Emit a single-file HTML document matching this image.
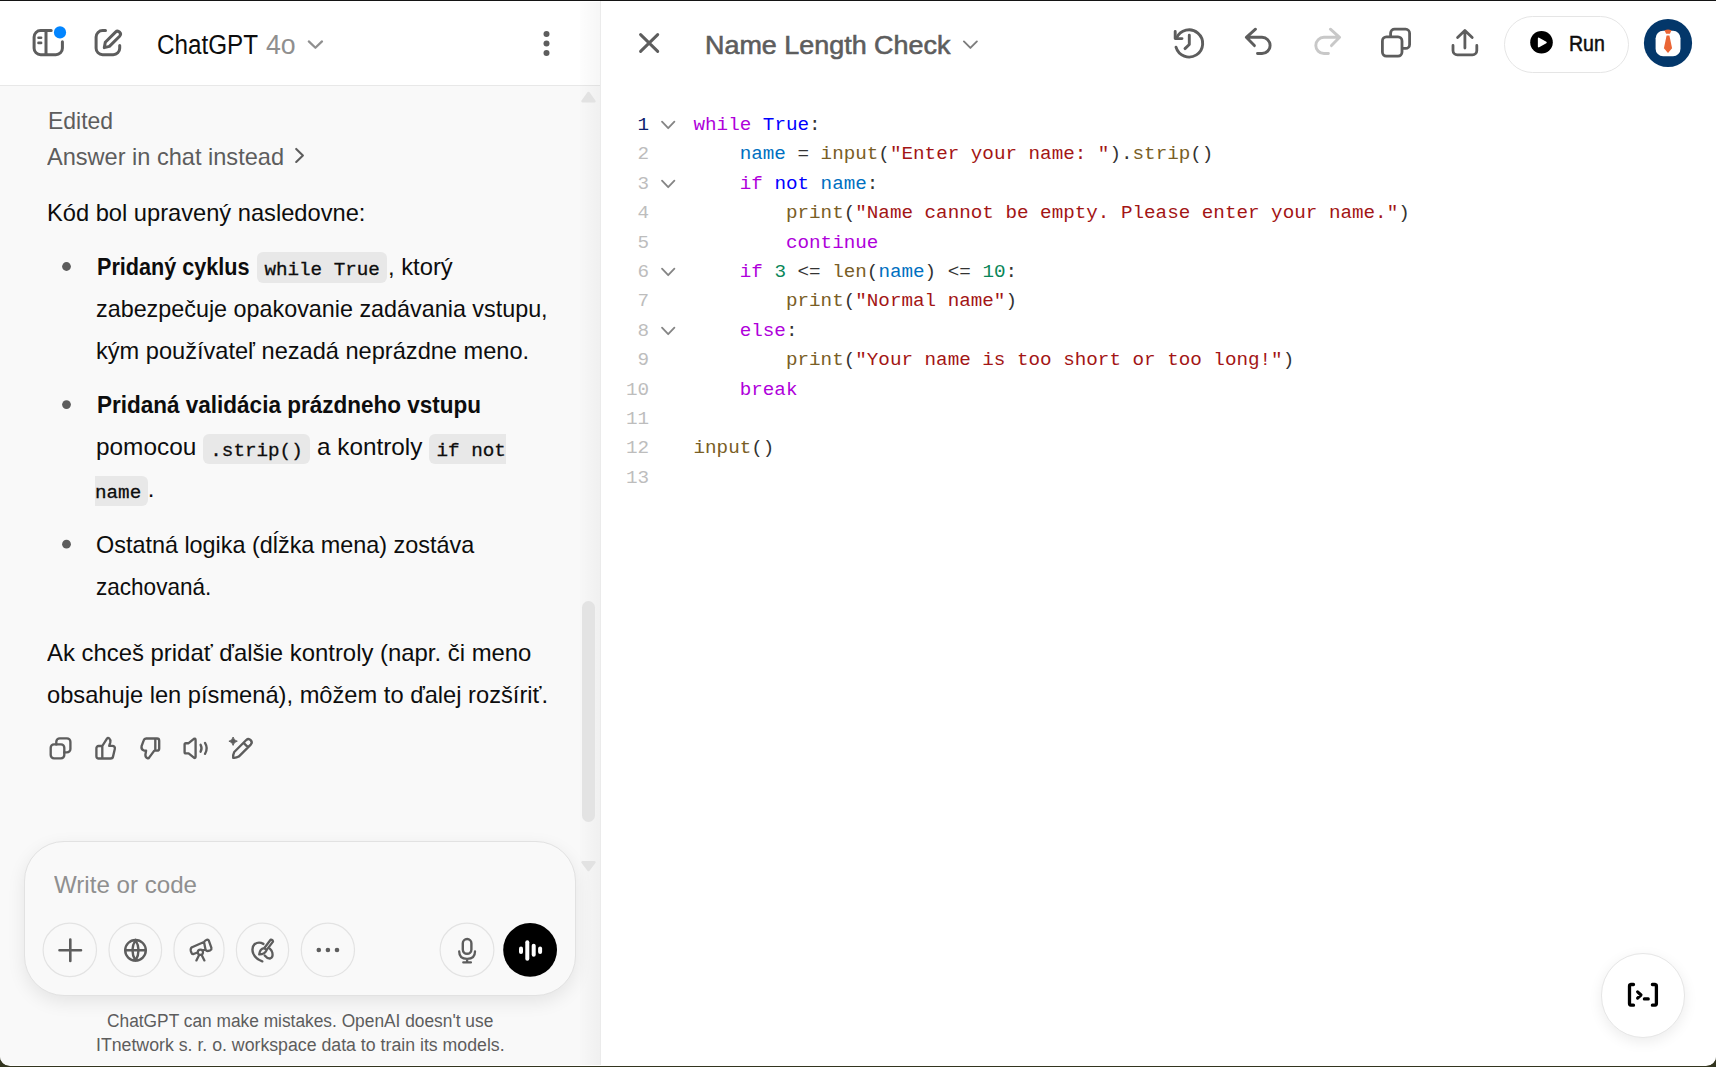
<!DOCTYPE html>
<html><head><meta charset="utf-8">
<style>
*{box-sizing:border-box;margin:0;padding:0}
html,body{width:1716px;height:1067px;overflow:hidden;background:#33351f;font-family:"Liberation Sans",sans-serif}
#win{position:absolute;left:0;top:1px;width:1716px;height:1065px;background:#fff;border-radius:0 0 10px 10px;overflow:hidden}
#left{position:absolute;left:0;top:0;width:600px;height:1064px;background:#f9f9f9}
#lhead{position:absolute;left:0;top:0;width:600px;height:85px;background:#fff;border-bottom:1.5px solid #e8e8e8}
#shade{position:absolute;left:580px;top:1px;width:20px;height:1063px;background:linear-gradient(to right,rgba(0,0,0,0.008),rgba(0,0,0,0.035))}
#right{position:absolute;left:600px;top:0;width:1116px;height:1064px;background:#fff}
#vline{position:absolute;left:600px;top:0;width:1px;height:1064px;background:#ebebeb}
.t{position:absolute;white-space:nowrap;line-height:1;font-family:"Liberation Sans",sans-serif}
.c{position:absolute;left:693.5px;white-space:pre;line-height:1;font-family:"Liberation Mono",monospace;font-size:19.25px;color:#333}
.ln{position:absolute;left:600px;width:49px;text-align:right;line-height:1;font-family:"Liberation Mono",monospace;font-size:19.25px}
.ic{position:absolute;background:#e8e8e8;border-radius:6px;height:30.6px;font-family:"Liberation Mono",monospace;font-size:19.25px;font-weight:400;-webkit-text-stroke:0.3px #0d0d0d;color:#0d0d0d;line-height:34px;white-space:pre}
#thumb{position:absolute;left:582px;top:599.5px;width:13px;height:221.5px;border-radius:7px;background:#e3e3e3}
#inbox{position:absolute;left:24px;top:840px;width:551.5px;height:155px;border-radius:40px;background:#f9f9f9;border:1.2px solid #e2e2e2;box-shadow:0 6px 18px rgba(0,0,0,0.085)}
#runbtn{position:absolute;left:1504px;top:14.6px;width:125px;height:57px;border-radius:29px;border:1.2px solid #e5e5e5;background:#fff}
#term{position:absolute;left:1600.7px;top:952.2px;width:84.5px;height:84.5px;border-radius:50%;background:#fff;border:1.2px solid #e6e6e6;box-shadow:0 4px 14px rgba(0,0,0,0.08)}
#ov{position:absolute;left:0;top:-1px;width:1716px;height:1067px}
</style></head><body>
<div style="position:absolute;left:0;top:0;width:1716px;height:1px;background:#141414"></div>
<div id="win">
<div id="left"><div id="lhead"></div></div>
<div id="right"></div>
<div id="shade"></div>
<div id="vline"></div>
<div id="thumb"></div>
<div id="inbox"></div>
<div id="runbtn"></div>
<div id="term"></div>
<div class="ic" style="left:257.1px;top:251px;width:129.7px;padding-left:7.3px;line-height:36.6px">while True</div>
<div class="ic" style="left:203px;top:432.5px;width:107px;padding-left:7.3px">.strip()</div>
<div class="ic" style="left:429.2px;top:432.5px;width:77.1px;padding-left:7.3px;border-radius:6px 0 0 6px">if not</div>
<div class="ic" style="left:95px;top:474.5px;width:52.6px;padding-left:0;border-radius:0 6px 6px 0">name</div>
<div class="c" style="top:115.24px"><span style="color:#af00db">while</span> <span style="color:#0000ff">True</span><span style="color:#333333">:</span></div>
<div class="ln" style="top:115.24px;color:#0b216f">1</div>
<div class="c" style="top:144.24px">    <span style="color:#0070c1">name</span><span style="color:#333333"> = </span><span style="color:#795e26">input</span><span style="color:#333333">(</span><span style="color:#a31515">"Enter your name: "</span><span style="color:#333333">).</span><span style="color:#795e26">strip</span><span style="color:#333333">()</span></div>
<div class="ln" style="top:144.24px;color:#bdbdbd">2</div>
<div class="c" style="top:174.24px">    <span style="color:#af00db">if</span> <span style="color:#0000ff">not</span> <span style="color:#0070c1">name</span><span style="color:#333333">:</span></div>
<div class="ln" style="top:174.24px;color:#bdbdbd">3</div>
<div class="c" style="top:203.24px">        <span style="color:#795e26">print</span><span style="color:#333333">(</span><span style="color:#a31515">"Name cannot be empty. Please enter your name."</span><span style="color:#333333">)</span></div>
<div class="ln" style="top:203.24px;color:#bdbdbd">4</div>
<div class="c" style="top:233.24px">        <span style="color:#af00db">continue</span></div>
<div class="ln" style="top:233.24px;color:#bdbdbd">5</div>
<div class="c" style="top:262.24px">    <span style="color:#af00db">if</span> <span style="color:#098658">3</span><span style="color:#333333"> &lt;= </span><span style="color:#795e26">len</span><span style="color:#333333">(</span><span style="color:#0070c1">name</span><span style="color:#333333">) &lt;= </span><span style="color:#098658">10</span><span style="color:#333333">:</span></div>
<div class="ln" style="top:262.24px;color:#bdbdbd">6</div>
<div class="c" style="top:291.24px">        <span style="color:#795e26">print</span><span style="color:#333333">(</span><span style="color:#a31515">"Normal name"</span><span style="color:#333333">)</span></div>
<div class="ln" style="top:291.24px;color:#bdbdbd">7</div>
<div class="c" style="top:321.24px">    <span style="color:#af00db">else</span><span style="color:#333333">:</span></div>
<div class="ln" style="top:321.24px;color:#bdbdbd">8</div>
<div class="c" style="top:350.24px">        <span style="color:#795e26">print</span><span style="color:#333333">(</span><span style="color:#a31515">"Your name is too short or too long!"</span><span style="color:#333333">)</span></div>
<div class="ln" style="top:350.24px;color:#bdbdbd">9</div>
<div class="c" style="top:380.24px">    <span style="color:#af00db">break</span></div>
<div class="ln" style="top:380.24px;color:#bdbdbd">10</div>
<div class="c" style="top:409.24px"></div>
<div class="ln" style="top:409.24px;color:#bdbdbd">11</div>
<div class="c" style="top:438.24px"><span style="color:#795e26">input</span><span style="color:#333333">()</span></div>
<div class="ln" style="top:438.24px;color:#bdbdbd">12</div>
<div class="c" style="top:468.24px"></div>
<div class="ln" style="top:468.24px;color:#bdbdbd">13</div>
</div>
<div style="position:absolute;left:0;top:0;width:1716px;height:1067px">
<div class="t" id="t0" style="left:157.00px;top:32.14px;font-size:27px;font-weight:400;color:#0d0d0d;transform:scaleX(0.8974);transform-origin:0 0;">ChatGPT</div>
<div class="t" id="t1" style="left:266.00px;top:32.14px;font-size:27px;font-weight:400;color:#8f8f8f;transform:scaleX(0.9885);transform-origin:0 0;">4o</div>
<div class="t" id="t2" style="left:47.50px;top:108.68px;font-size:24px;font-weight:400;color:#5d5d5d;transform:scaleX(0.9550);transform-origin:0 0;">Edited</div>
<div class="t" id="t3" style="left:47.10px;top:144.68px;font-size:24px;font-weight:400;color:#5d5d5d;transform:scaleX(0.9815);transform-origin:0 0;">Answer in chat instead</div>
<div class="t" id="t4" style="left:47.30px;top:201.18px;font-size:24px;font-weight:400;color:#0d0d0d;transform:scaleX(0.9860);transform-origin:0 0;">Kód bol upravený nasledovne:</div>
<div class="t" id="t5" style="left:96.50px;top:255.91px;font-size:23.5px;font-weight:700;color:#0d0d0d;transform:scaleX(0.9199);transform-origin:0 0;">Pridaný cyklus</div>
<div class="t" id="t6" style="left:387.50px;top:255.48px;font-size:24px;font-weight:400;color:#0d0d0d;transform:scaleX(0.9901);transform-origin:0 0;">, ktorý</div>
<div class="t" id="t7" style="left:95.60px;top:297.28px;font-size:24px;font-weight:400;color:#0d0d0d;transform:scaleX(0.9726);transform-origin:0 0;">zabezpečuje opakovanie zadávania vstupu,</div>
<div class="t" id="t8" style="left:95.60px;top:339.08px;font-size:24px;font-weight:400;color:#0d0d0d;transform:scaleX(0.9830);transform-origin:0 0;">kým používateľ nezadá neprázdne meno.</div>
<div class="t" id="t9" style="left:96.50px;top:393.61px;font-size:23.5px;font-weight:700;color:#0d0d0d;transform:scaleX(0.9578);transform-origin:0 0;">Pridaná validácia prázdneho vstupu</div>
<div class="t" id="t10" style="left:95.50px;top:435.08px;font-size:24px;font-weight:400;color:#0d0d0d;transform:scaleX(1.0159);transform-origin:0 0;">pomocou</div>
<div class="t" id="t11" style="left:317.00px;top:435.08px;font-size:24px;font-weight:400;color:#0d0d0d;transform:scaleX(1.0119);transform-origin:0 0;">a kontroly</div>
<div class="t" id="t12" style="left:147.80px;top:477.48px;font-size:24px;font-weight:400;color:#0d0d0d;transform:scaleX(1.0000);transform-origin:0 0;">.</div>
<div class="t" id="t13" style="left:96.00px;top:533.18px;font-size:24px;font-weight:400;color:#0d0d0d;transform:scaleX(0.9743);transform-origin:0 0;">Ostatná logika (dĺžka mena) zostáva</div>
<div class="t" id="t14" style="left:95.60px;top:574.98px;font-size:24px;font-weight:400;color:#0d0d0d;transform:scaleX(0.9392);transform-origin:0 0;">zachovaná.</div>
<div class="t" id="t15" style="left:47.30px;top:641.28px;font-size:24px;font-weight:400;color:#0d0d0d;transform:scaleX(0.9954);transform-origin:0 0;">Ak chceš pridať ďalšie kontroly (napr. či meno</div>
<div class="t" id="t16" style="left:47.30px;top:682.98px;font-size:24px;font-weight:400;color:#0d0d0d;transform:scaleX(0.9863);transform-origin:0 0;">obsahuje len písmená), môžem to ďalej rozšíriť.</div>
<div class="t" id="t17" style="left:54.20px;top:873.18px;font-size:24px;font-weight:400;color:#8f8f8f;transform:scaleX(1.0051);transform-origin:0 0;">Write or code</div>
<div class="t" id="t18" style="left:106.70px;top:1011.76px;font-size:18px;font-weight:400;color:#5d5d5d;transform:scaleX(0.9626);transform-origin:0 0;">ChatGPT can make mistakes. OpenAI doesn't use</div>
<div class="t" id="t19" style="left:96.40px;top:1035.96px;font-size:18px;font-weight:400;color:#5d5d5d;transform:scaleX(0.9842);transform-origin:0 0;">ITnetwork s. r. o. workspace data to train its models.</div>
<div class="t" id="t20" style="left:705.00px;top:32.27px;font-size:26.5px;font-weight:400;color:#5d5d5d;transform:scaleX(1.0158);transform-origin:0 0;-webkit-text-stroke:0.6px #5d5d5d;">Name Length Check</div>
<div class="t" id="t21" style="left:1568.80px;top:32.72px;font-size:21.6px;font-weight:400;color:#0d0d0d;transform:scaleX(0.9035);transform-origin:0 0;-webkit-text-stroke:0.5px #0d0d0d;">Run</div>
</div>
<svg id="ov" width="1716" height="1067" viewBox="0 0 1716 1067" style="position:absolute;left:0;top:0">
<path d="M51.2 30.6 H40.6 A6.5 6.5 0 0 0 34.1 37.1 V48.2 A6.5 6.5 0 0 0 40.6 54.7 H55.9 A6.5 6.5 0 0 0 62.4 48.2 V41.8" stroke="#5d5d5d" stroke-width="3" fill="none" stroke-linecap="round" stroke-linejoin="round"/>
<path d="M46 31 V54.5" stroke="#5d5d5d" stroke-width="3" fill="none" stroke-linecap="round" stroke-linejoin="round"/>
<path d="M38.5 37.8 H41.1 M38.5 42.9 H41.1" stroke="#5d5d5d" stroke-width="2.6" fill="none" stroke-linecap="round" stroke-linejoin="round"/>
<circle cx="60" cy="32.4" r="6.1" fill="#0285ff"/>
<path d="M105.5 30.6 H102.6 A6.5 6.5 0 0 0 96.1 37.1 V48.2 A6.5 6.5 0 0 0 102.6 54.7 H113.2 A6.5 6.5 0 0 0 119.7 48.2 V45.5" stroke="#5d5d5d" stroke-width="3" fill="none" stroke-linecap="round" stroke-linejoin="round"/>
<path d="M104.3 47.6 L105.3 42.3 L115.5 32.1 A2.9 2.9 0 0 1 119.6 36.2 L109.4 46.4 Z" stroke="#5d5d5d" stroke-width="3" fill="none" stroke-linecap="round" stroke-linejoin="round"/>
<circle cx="546.5" cy="34.1" r="3" fill="#5d5d5d"/>
<circle cx="546.5" cy="43.4" r="3" fill="#5d5d5d"/>
<circle cx="546.5" cy="53" r="3" fill="#5d5d5d"/>
<path d="M308.8 41.4 L315.4 47.8 L322 41.4" stroke="#8f8f8f" stroke-width="2.2" fill="none" stroke-linecap="round" stroke-linejoin="round"/>
<path d="M296.2 148.9 L302.9 155.4 L296.2 161.9" stroke="#5d5d5d" stroke-width="2.1" fill="none" stroke-linecap="round" stroke-linejoin="round"/>
<path d="M640.6 34.6 L657.7 51.4 M657.7 34.6 L640.6 51.4" stroke="#5d5d5d" stroke-width="3" fill="none" stroke-linecap="round" stroke-linejoin="round"/>
<path d="M963.9 41.4 L970.4 47.9 L976.9 41.4" stroke="#7d7d7d" stroke-width="1.9" fill="none" stroke-linecap="round" stroke-linejoin="round"/>
<path d="M1176.6 38 A13.6 13.6 0 1 1 1176 47.2" stroke="#5d5d5d" stroke-width="2.9" fill="none" stroke-linecap="round" stroke-linejoin="round"/>
<path d="M1175.2 31.4 V38.6 H1182" stroke="#5d5d5d" stroke-width="2.9" fill="none" stroke-linecap="round" stroke-linejoin="round"/>
<path d="M1189.3 35.2 V44.5 L1185 48.6" stroke="#5d5d5d" stroke-width="2.9" fill="none" stroke-linecap="round" stroke-linejoin="round"/>
<path d="M1255.5 29.2 L1246.3 37.3 L1254.4 45.6 M1246.8 37.3 H1262 A8.1 8.1 0 0 1 1262 53.5 H1257.5" stroke="#5d5d5d" stroke-width="2.9" fill="none" stroke-linecap="round" stroke-linejoin="round"/>
<g transform="translate(2585.9 0) scale(-1 1)"><path d="M1255.5 29.2 L1246.3 37.3 L1254.4 45.6 M1246.8 37.3 H1262 A8.1 8.1 0 0 1 1262 53.5 H1257.5" stroke="#c8c8c8" stroke-width="2.9" fill="none" stroke-linecap="round" stroke-linejoin="round"/></g>
<path d="M1390.6 36 V33 A4 4 0 0 1 1394.6 29.2 H1405.6 A4 4 0 0 1 1409.6 33.2 V44.4 A4 4 0 0 1 1405.6 48.4 H1402.6" stroke="#5d5d5d" stroke-width="2.8" fill="none" stroke-linecap="round" stroke-linejoin="round"/>
<rect x="1382.4" y="36.9" width="19.6" height="19.2" rx="4" stroke="#5d5d5d" stroke-width="2.8" fill="none" stroke-linecap="round" stroke-linejoin="round"/>
<path d="M1464.9 48 V31 M1457.6 37.6 L1464.9 30.6 L1472.2 37.6 M1453 45.5 V50.5 A4.3 4.3 0 0 0 1457.3 54.8 H1472.5 A4.3 4.3 0 0 0 1476.8 50.5 V45.5" stroke="#5d5d5d" stroke-width="2.8" fill="none" stroke-linecap="round" stroke-linejoin="round"/>
<circle cx="1541.5" cy="42.3" r="11.3" fill="#000"/>
<path d="M1538.7 38.4 L1545.9 42.4 L1538.7 46.6 Z" fill="#fff" stroke="#fff" stroke-width="1.7" stroke-linejoin="round"/>
<circle cx="1668" cy="43" r="24.1" fill="#03376a"/>
<rect x="1655.6" y="30.7" width="24.9" height="25.6" rx="7.5" fill="#fff"/>
<path d="M1664.5 30.3 Q1668 28.8 1671.5 30.3 L1669.9 33.8 H1666.1 Z" fill="#ea6535"/>
<path d="M1666.6 35.4 H1669.4 L1672.1 48.2 L1668 53 L1663.9 48.2 Z" fill="#ea6535"/>
<circle cx="66.5" cy="266.5" r="4.4" fill="#5d5d5d"/>
<circle cx="66.5" cy="404.6" r="4.4" fill="#5d5d5d"/>
<circle cx="66.5" cy="544.2" r="4.4" fill="#5d5d5d"/>
<path d="M588.5 93 L594.4 101.2 H582.6 Z" fill="#e2e2e2" stroke="#e2e2e2" stroke-width="2.6" stroke-linejoin="round"/>
<path d="M582.6 862.3 H594.4 L588.5 870 Z" fill="#e2e2e2" stroke="#e2e2e2" stroke-width="2.6" stroke-linejoin="round"/>
<path d="M56.3 744.4 V741.8 A3.5 3.5 0 0 1 59.8 738.3 H66.9 A3.5 3.5 0 0 1 70.4 741.8 V748.9 A3.5 3.5 0 0 1 66.9 752.4 H64.3" stroke="#5d5d5d" stroke-width="2.35" fill="none" stroke-linecap="round" stroke-linejoin="round"/>
<rect x="50.7" y="744.4" width="13.6" height="13.9" rx="3.3" stroke="#5d5d5d" stroke-width="2.35" fill="none" stroke-linecap="round" stroke-linejoin="round"/>
<path d="M102.3 746 L106.8 738.8 Q107.8 737.3 109.2 738.4 Q110.9 739.9 110.3 742.3 L109.2 745.8 H112.4 A2.5 2.5 0 0 1 114.8 749 L113.1 756.3 A2.6 2.6 0 0 1 110.5 758.5 H98.3 A2.2 2.2 0 0 1 96.4 756.3 V748.5 A2.3 2.3 0 0 1 98.6 746 H102.3 V758.4" stroke="#5d5d5d" stroke-width="2.35" fill="none" stroke-linecap="round" stroke-linejoin="round"/>
<path d="M155.3 738.5 H146.2 Q144.3 738.5 143.7 740.4 L141.6 746.2 Q140.9 749.4 143.9 750.5 L146.1 750.6 L145.4 754.8 Q145.3 757.2 147.4 758.2 Q148.6 758.7 149.3 757.4 L154.3 750.6 H157 Q159.2 750.6 159.2 748.4 V740.7 Q159.2 738.5 157 738.5 H155.3 V750.6" stroke="#5d5d5d" stroke-width="2.35" fill="none" stroke-linecap="round" stroke-linejoin="round"/>
<path d="M195.6 740.2 V756.6 Q195.6 758.6 193.9 757.7 L188.6 753.4 H185.9 Q184.6 753.4 184.6 752 V744.6 Q184.6 743.2 185.9 743.2 H188.6 L193.9 738.9 Q195.6 738 195.6 740.2 Z" stroke="#5d5d5d" stroke-width="2.35" fill="none" stroke-linecap="round" stroke-linejoin="round"/>
<path d="M200.6 744.8 Q202.6 748.3 200.6 751.7 M205 742.9 Q208.4 748.3 205 753.8" stroke="#5d5d5d" stroke-width="2.35" fill="none" stroke-linecap="round" stroke-linejoin="round"/>
<path d="M234.24 752.04 L246.24 740.04 A3.2 3.2 0 0 1 250.76 744.56 L238.76 756.56 Q236 758.2 233.2 757.8 Q232.8 755 234.24 752.04 Z M243.6 742.9 L247.6 746.9" stroke="#5d5d5d" stroke-width="2.35" fill="none" stroke-linecap="round" stroke-linejoin="round"/>
<path d="M233.1 737 Q233.8 740.5 237.3 741.2 Q233.8 741.9 233.1 745.4 Q232.4 741.9 228.9 741.2 Q232.4 740.5 233.1 737 Z" fill="#5d5d5d" stroke="#5d5d5d" stroke-width="0.9" stroke-linejoin="round"/>
<rect x="43.1" y="923.2" width="53.4" height="53.4" rx="26.7" fill="none" stroke="#e3e3e3" stroke-width="1.2"/>
<rect x="109.0" y="923.2" width="52.6" height="53.4" rx="26.3" fill="none" stroke="#e3e3e3" stroke-width="1.2"/>
<rect x="174.0" y="923.2" width="50" height="53.4" rx="25.0" fill="none" stroke="#e3e3e3" stroke-width="1.2"/>
<rect x="236.4" y="923.2" width="52.2" height="53.4" rx="26.1" fill="none" stroke="#e3e3e3" stroke-width="1.2"/>
<rect x="301.3" y="923.2" width="53.2" height="53.4" rx="26.6" fill="none" stroke="#e3e3e3" stroke-width="1.2"/>
<rect x="440.1" y="923.2" width="53.8" height="53.4" rx="26.9" fill="none" stroke="#e3e3e3" stroke-width="1.2"/>
<circle cx="530.1" cy="949.9" r="26.9" fill="#000"/>
<path d="M70.3 939.5 V961 M59.5 950.2 H81" stroke="#5d5d5d" stroke-width="2.6" fill="none" stroke-linecap="round" stroke-linejoin="round"/>
<circle cx="135.5" cy="950.3" r="10.3" stroke="#5d5d5d" stroke-width="2.4" fill="none"/>
<path d="M125.5 950.3 H145.5 M135.5 940 Q129.3 950.3 135.5 960.6 Q141.7 950.3 135.5 940" stroke="#5d5d5d" stroke-width="2.4" fill="none" stroke-linecap="round" stroke-linejoin="round"/>
<path d="M192 947.3 L204 942 M193.6 954 L205.5 949.4 M192 947.3 Q190.3 948.3 190.8 950.8 L191.3 952.3 Q192 954.5 193.6 954 M204 942 Q204.8 940.6 206.8 939.8 Q208.3 939.3 208.9 940.8 L211.4 947.9 Q211.8 949.5 210.2 950.3 L208.5 950.9 Q206.5 951.4 205.5 949.4 Z" stroke="#5d5d5d" stroke-width="2.3" fill="none" stroke-linecap="round" stroke-linejoin="round"/>
<circle cx="200.4" cy="952.3" r="2.6" stroke="#5d5d5d" stroke-width="2.2" fill="#f9f9f9"/>
<path d="M199 955.3 L196.4 960.4 M201.8 955.3 L204.4 960.4" stroke="#5d5d5d" stroke-width="2.3" fill="none" stroke-linecap="round" stroke-linejoin="round"/>
<path d="M263.4 943.9 Q258.6 941.2 254.6 944.2 Q251.2 947.6 253.2 953.4 Q255.6 959.2 262.3 961.3" stroke="#5d5d5d" stroke-width="2.4" fill="none" stroke-linecap="round" stroke-linejoin="round"/>
<path d="M270.6 939.7 Q272.6 939.5 273 941.6 L266.7 949.9 L264.2 948.2 Z M264.2 948.2 Q259.8 949 259.2 954.4 Q264.4 954.6 266.7 949.9" stroke="#5d5d5d" stroke-width="2.3" fill="none" stroke-linecap="round" stroke-linejoin="round"/>
<path d="M264.7 955.4 Q267.5 958.8 270.2 958.5 Q273.4 957.4 272.3 952.5 Q271.6 950.3 269.8 948.6" stroke="#5d5d5d" stroke-width="2.3" fill="none" stroke-linecap="round" stroke-linejoin="round"/>
<circle cx="318.8" cy="950" r="2.3" fill="#5d5d5d"/>
<circle cx="327.9" cy="950" r="2.3" fill="#5d5d5d"/>
<circle cx="337" cy="950" r="2.3" fill="#5d5d5d"/>
<rect x="462.8" y="939" width="8.6" height="14.8" rx="4.3" stroke="#5d5d5d" stroke-width="2.4" fill="none"/>
<path d="M459.2 951.4 Q459.2 958.8 467.1 958.8 Q475 958.8 475 951.4 M467.1 958.8 V962.4 M463.3 962.4 H470.9" stroke="#5d5d5d" stroke-width="2.3" fill="none" stroke-linecap="round" stroke-linejoin="round"/>
<path d="M521 948.6 V952" stroke="#fff" stroke-width="4" stroke-linecap="round"/>
<path d="M527.3 942.3 V958.8" stroke="#fff" stroke-width="4" stroke-linecap="round"/>
<path d="M533.7 945.8 V954.8" stroke="#fff" stroke-width="4" stroke-linecap="round"/>
<path d="M540.1 948.6 V952" stroke="#fff" stroke-width="4" stroke-linecap="round"/>
<path d="M1633.5 984.5 H1631 A1.8 1.8 0 0 0 1629.5 986.3 V1003.4 A1.8 1.8 0 0 0 1631 1005.2 H1633.5 M1652.4 984.5 H1654.9 A1.8 1.8 0 0 1 1656.4 986.3 V1003.4 A1.8 1.8 0 0 1 1654.9 1005.2 H1652.4" stroke="#000" stroke-width="3.3" fill="none" stroke-linecap="round" stroke-linejoin="round"/>
<path d="M1637.6 991.8 L1641 995 L1637.6 998.2 M1644.3 998.9 H1648.3" stroke="#000" stroke-width="3.1" fill="none" stroke-linecap="round" stroke-linejoin="round"/>
<path d="M662 327.6 L668.2 334.2 L674.4 327.6" fill="none" stroke="#858585" stroke-width="1.8" stroke-linecap="round" stroke-linejoin="round"/>
<path d="M662 121.6 L668.2 128.2 L674.4 121.6" fill="none" stroke="#858585" stroke-width="1.8" stroke-linecap="round" stroke-linejoin="round"/>
<path d="M662 180.6 L668.2 187.2 L674.4 180.6" fill="none" stroke="#858585" stroke-width="1.8" stroke-linecap="round" stroke-linejoin="round"/>
<path d="M662 268.6 L668.2 275.2 L674.4 268.6" fill="none" stroke="#858585" stroke-width="1.8" stroke-linecap="round" stroke-linejoin="round"/>
</svg>
</body></html>
